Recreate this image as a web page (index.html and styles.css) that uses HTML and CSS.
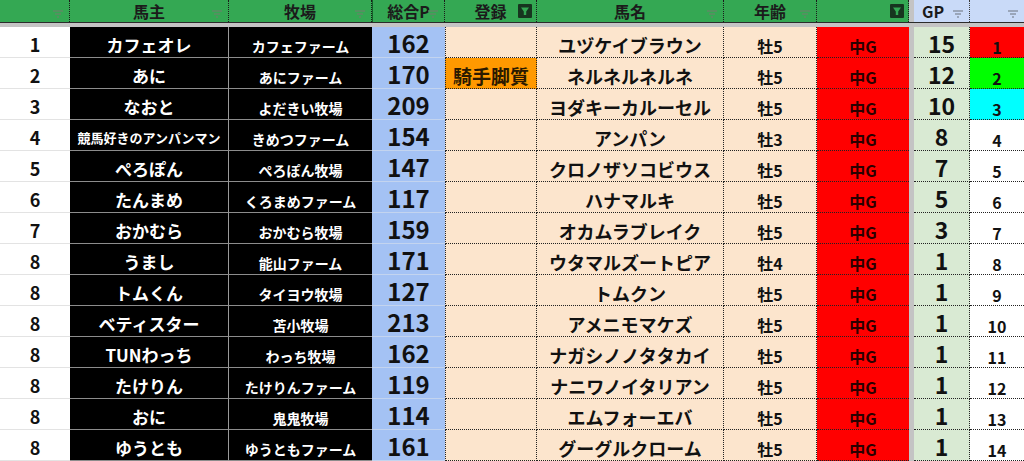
FILE: index.html
```html
<!DOCTYPE html>
<html lang="ja">
<head>
<meta charset="utf-8">
<link rel="stylesheet" href="styles.css">
<title>Ranking</title>
</head>
<body>
<div class="sheet">
  <div class="row head">
    <div class="h"><svg class="fi" viewBox="0 0 10 8"><path d="M0 1h10M2 4h6M4 7h2" /></svg></div>
    <div class="h">馬主<svg class="fi" viewBox="0 0 10 8"><path d="M0 1h10M2 4h6M4 7h2" /></svg></div>
    <div class="h">牧場<svg class="fi" viewBox="0 0 10 8"><path d="M0 1h10M2 4h6M4 7h2" /></svg></div>
    <div class="h h-sel">総合P<svg class="fi" viewBox="0 0 10 8"><path d="M0 1h10M2 4h6M4 7h2" /></svg></div>
    <div class="h">登録<svg class="fa" viewBox="0 0 14 14"><rect width="14" height="14" rx="1" fill="#17351f"/><path d="M3 3.5h8L8.2 7.5V11H5.8V7.5Z" fill="#34a853"/></svg></div>
    <div class="h">馬名<svg class="fi" viewBox="0 0 10 8"><path d="M0 1h10M2 4h6M4 7h2" /></svg></div>
    <div class="h">年齢<svg class="fi" viewBox="0 0 10 8"><path d="M0 1h10M2 4h6M4 7h2" /></svg></div>
    <div class="h"><svg class="fa" viewBox="0 0 14 14"><rect width="14" height="14" rx="1" fill="#17351f"/><path d="M3 3.5h8L8.2 7.5V11H5.8V7.5Z" fill="#34a853"/></svg></div>
    <div class="h div"></div>
    <div class="h hb">GP<svg class="fi fi-b" viewBox="0 0 10 8"><path d="M0 1h10M2 4h6M4 7h2" /></svg></div>
    <div class="h hb"><svg class="fi fi-b" viewBox="0 0 10 8"><path d="M0 1h10M2 4h6M4 7h2" /></svg></div>
  </div>
  <div class="sep"><span class="sep-l"></span><span class="sep-d"></span><span class="sep-r"></span></div>

  <div class="row"><div class="c rank">1</div><div class="c owner">カフェオレ</div><div class="c farm">カフェファーム</div><div class="c pts">162</div><div class="c reg"></div><div class="c horse">ユヅケイブラウン</div><div class="c age">牡5</div><div class="c g">中G</div><div class="c div"></div><div class="c gp">15</div><div class="c num red">1</div></div>
  <div class="row"><div class="c rank">2</div><div class="c owner">あに</div><div class="c farm">あにファーム</div><div class="c pts">170</div><div class="c reg orange">騎手脚質</div><div class="c horse">ネルネルネルネ</div><div class="c age">牡5</div><div class="c g">中G</div><div class="c div"></div><div class="c gp">12</div><div class="c num green">2</div></div>
  <div class="row"><div class="c rank">3</div><div class="c owner">なおと</div><div class="c farm">よだきい牧場</div><div class="c pts">209</div><div class="c reg"></div><div class="c horse">ヨダキーカルーセル</div><div class="c age">牡5</div><div class="c g">中G</div><div class="c div"></div><div class="c gp">10</div><div class="c num cyan">3</div></div>
  <div class="row"><div class="c rank">4</div><div class="c owner small">競馬好きのアンパンマン</div><div class="c farm">きめつファーム</div><div class="c pts">154</div><div class="c reg"></div><div class="c horse">アンパン</div><div class="c age">牡3</div><div class="c g">中G</div><div class="c div"></div><div class="c gp">8</div><div class="c num">4</div></div>
  <div class="row"><div class="c rank">5</div><div class="c owner">ぺろぽん</div><div class="c farm">ぺろぽん牧場</div><div class="c pts">147</div><div class="c reg"></div><div class="c horse">クロノザソコビウス</div><div class="c age">牡5</div><div class="c g">中G</div><div class="c div"></div><div class="c gp">7</div><div class="c num">5</div></div>
  <div class="row"><div class="c rank">6</div><div class="c owner">たんまめ</div><div class="c farm">くろまめファーム</div><div class="c pts">117</div><div class="c reg"></div><div class="c horse">ハナマルキ</div><div class="c age">牡5</div><div class="c g">中G</div><div class="c div"></div><div class="c gp">5</div><div class="c num">6</div></div>
  <div class="row"><div class="c rank">7</div><div class="c owner">おかむら</div><div class="c farm">おかむら牧場</div><div class="c pts">159</div><div class="c reg"></div><div class="c horse">オカムラブレイク</div><div class="c age">牡5</div><div class="c g">中G</div><div class="c div"></div><div class="c gp">3</div><div class="c num">7</div></div>
  <div class="row"><div class="c rank">8</div><div class="c owner">うまし</div><div class="c farm">能山ファーム</div><div class="c pts">171</div><div class="c reg"></div><div class="c horse">ウタマルズートピア</div><div class="c age">牡4</div><div class="c g">中G</div><div class="c div"></div><div class="c gp">1</div><div class="c num">8</div></div>
  <div class="row"><div class="c rank">8</div><div class="c owner">トムくん</div><div class="c farm">タイヨウ牧場</div><div class="c pts">127</div><div class="c reg"></div><div class="c horse">トムクン</div><div class="c age">牡5</div><div class="c g">中G</div><div class="c div"></div><div class="c gp">1</div><div class="c num">9</div></div>
  <div class="row"><div class="c rank">8</div><div class="c owner">ベティスター</div><div class="c farm">苫小牧場</div><div class="c pts">213</div><div class="c reg"></div><div class="c horse">アメニモマケズ</div><div class="c age">牡5</div><div class="c g">中G</div><div class="c div"></div><div class="c gp">1</div><div class="c num">10</div></div>
  <div class="row"><div class="c rank">8</div><div class="c owner">TUNわっち</div><div class="c farm">わっち牧場</div><div class="c pts">162</div><div class="c reg"></div><div class="c horse">ナガシノノタタカイ</div><div class="c age">牡5</div><div class="c g">中G</div><div class="c div"></div><div class="c gp">1</div><div class="c num">11</div></div>
  <div class="row"><div class="c rank">8</div><div class="c owner">たけりん</div><div class="c farm">たけりんファーム</div><div class="c pts">119</div><div class="c reg"></div><div class="c horse">ナニワノイタリアン</div><div class="c age">牡5</div><div class="c g">中G</div><div class="c div"></div><div class="c gp">1</div><div class="c num">12</div></div>
  <div class="row"><div class="c rank">8</div><div class="c owner">おに</div><div class="c farm">鬼鬼牧場</div><div class="c pts">114</div><div class="c reg"></div><div class="c horse">エムフォーエバ</div><div class="c age">牡5</div><div class="c g">中G</div><div class="c div"></div><div class="c gp">1</div><div class="c num">13</div></div>
  <div class="row"><div class="c rank">8</div><div class="c owner">ゆうとも</div><div class="c farm">ゆうともファーム</div><div class="c pts">161</div><div class="c reg"></div><div class="c horse">グーグルクローム</div><div class="c age">牡5</div><div class="c g">中G</div><div class="c div"></div><div class="c gp">1</div><div class="c num">14</div></div>
</div>
</body>
</html>
```

FILE: styles.css
```css
* { box-sizing: border-box; }
html, body { margin: 0; padding: 0; background: #fff; }
body {
  font-family: "Noto Sans CJK JP", "Noto Sans", sans-serif;
  color: #111;
  overflow: hidden;
  width: 1024px;
  height: 461px;
}
.sheet { width: 1024px; }
.row {
  display: grid;
  grid-template-columns: 70px 159px 143px 73px 92px 187px 93px 92px 5px 56px 54px;
  height: 31px;
}
.row.head { height: 23px; border-bottom: 1px solid #2b2b2b; }

.h {
  position: relative;
  background: #34a853;
  display: flex;
  align-items: center;
  justify-content: center;
  font-weight: 700;
  font-size: 16px;
  line-height: 1;
  color: #1b1b1b;
  border-right: 1px dotted #1a1a1a;
  padding-bottom: 1px;
}
.h-sel { border-left: 1px solid #135f27; }
.h.hb { background: #c9daf8; border-right: 1px dotted #3a3a3a; justify-content: flex-start; padding-left: 8px; }
.h.hb:last-child { border-right: 0; }
.h.div { background: #c4c4c4; border-right: 0; }

.fi {
  position: absolute;
  right: 6px;
  top: 10px;
  width: 10px;
  height: 8px;
  stroke: #5e8a66;
  stroke-width: 1.3;
  fill: none;
}
.fi-b { stroke: #8a95a5; }
.fa {
  position: absolute;
  right: 4px;
  top: 4px;
  width: 14px;
  height: 14px;
}

.sep {
  display: grid;
  grid-template-columns: 909px 5px 110px;
  height: 4px;
}
.sep span { background: #c4c4c4; }

.c {
  display: flex;
  align-items: flex-end;
  justify-content: center;
  padding-bottom: 2px;
  line-height: 1.15;
  white-space: nowrap;
  font-weight: 700;
}
.rank {
  font-size: 18px;
  border-bottom: 1px solid #e3e3e3;
  color: #111;
}
.owner {
  background: #000;
  color: #fff;
  font-size: 17px;
  border-bottom: 1px solid #8c8c8c;
  border-right: 1px solid #9a9a9a;
}
.owner.small { font-size: 13px; padding-bottom: 4px; }
.farm {
  background: #000;
  color: #fff;
  font-size: 14px;
  border-bottom: 1px solid #8c8c8c;
  padding-bottom: 3px;
}
.pts {
  background: #a4c2f4;
  font-size: 24px;
  line-height: 1.1;
  padding-bottom: 1px;
  border-bottom: 1px solid #c3d4ef;
  color: #111;
}
.reg, .horse, .age, .g {
  background: #fce5cd;
  border-bottom: 1px dotted #222;
  border-right: 1px dotted #222;
}
.reg { border-left: 1px dotted #222; }
.reg.orange { background: #ff9900; font-size: 19px; color: #2a1a00; padding-bottom: 1px; }
.horse { font-size: 18px; font-weight: 600; padding-bottom: 1px; }
.age { font-size: 16px; font-weight: 600; }
.g { background: #ff0000; font-size: 16px; font-weight: 700; border-right: 0; color: #2a0000; }
.c.div { background: #c4c4c4; padding: 0; }
.gp {
  background: #d9ead3;
  font-size: 23px;
  line-height: 1.1;
  padding-bottom: 1px;
  border-bottom: 1px dotted #222;
  border-right: 1px dotted #222;
}
.num {
  font-size: 16px;
  font-weight: 700;
  border-bottom: 1px dotted #222;
  padding-bottom: 1px;
}
.num.red { background: #ff0000; }
.num.green { background: #00ff00; }
.num.cyan { background: #00ffff; }
```
